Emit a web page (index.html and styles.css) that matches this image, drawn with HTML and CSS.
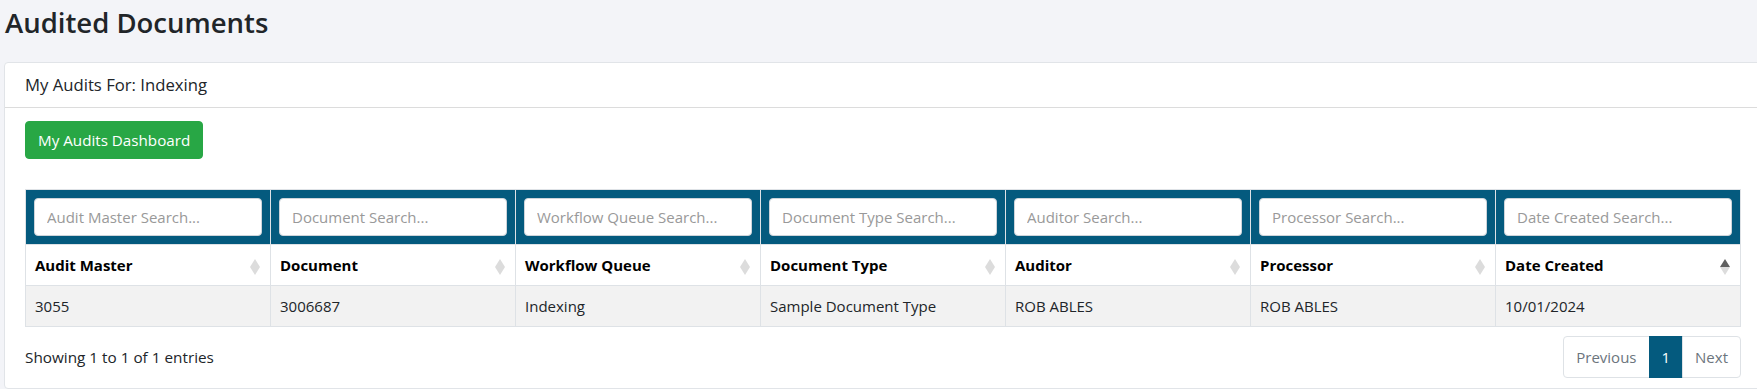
FILE: index.html
```html
<html>
    <head>
        <link rel="stylesheet" href="styles.css">
    </head>
    <body>
        <h3 class="page-title">Audited Documents</h3>

        <div class="card">
            <div class="card-header">My Audits For: Indexing</div>

            <div class="card-body">
                <button class="btn-dashboard">My Audits Dashboard</button>

                <table class="audits">
                    <thead>
                        <tr class="filters">
                            <th><input type="text" placeholder="Audit Master Search..."></th>
                            <th><input type="text" placeholder="Document Search..."></th>
                            <th><input type="text" placeholder="Workflow Queue Search..."></th>
                            <th><input type="text" placeholder="Document Type Search..."></th>
                            <th><input type="text" placeholder="Auditor Search..."></th>
                            <th><input type="text" placeholder="Processor Search..."></th>
                            <th><input type="text" placeholder="Date Created Search..."></th>
                        </tr>
                        <tr class="headings">
                            <th class="sorting">Audit Master</th>
                            <th class="sorting">Document</th>
                            <th class="sorting">Workflow Queue</th>
                            <th class="sorting">Document Type</th>
                            <th class="sorting">Auditor</th>
                            <th class="sorting">Processor</th>
                            <th class="sorting asc">Date Created</th>
                        </tr>
                    </thead>
                    <tbody>
                        <tr>
                            <td>3055</td>
                            <td>3006687</td>
                            <td>Indexing</td>
                            <td>Sample Document Type</td>
                            <td>ROB ABLES</td>
                            <td>ROB ABLES</td>
                            <td>10/01/2024</td>
                        </tr>
                    </tbody>
                </table>

                <div class="table-footer">
                    <div class="info">Showing 1 to 1 of 1 entries</div>
                    <ul class="pagination">
                        <li><a href="#">Previous</a></li>
                        <li class="active"><a href="#">1</a></li>
                        <li><a href="#">Next</a></li>
                    </ul>
                </div>
            </div>
        </div>
    </body>
</html>
```

FILE: styles.css
```css
html {
    overflow: hidden;
}

body {
    margin: 0;
    padding: 0 0 0 4px;
    background: #f3f4f8;
    font-family: "Open Sans", sans-serif;
    color: #212529;
}

.page-title {
    margin: 6px 0 23px 1px;
    font-size: 27.5px;
    font-weight: 600;
    line-height: 33px;
    color: #212529;
}

.card {
    width: 1758px;
    background: white;
    border: 1px solid #e1e4e8;
    border-radius: 4px;
}

.card-header {
    padding: 10px 20px;
    font-size: 16.7px;
    line-height: 24px;
    border-bottom: 1px solid #dcdcdc;
}

.card-body {
    padding: 13px 20px 10px 20px;
}

.btn-dashboard {
    display: block;
    height: 38px;
    padding: 0 12px;
    margin-bottom: 30px;
    border: 1px solid #28a745;
    border-radius: 4px;
    background: #28a745;
    color: white;
    font-family: "Open Sans", sans-serif;
    font-size: 15.2px;
    line-height: 36px;
    cursor: pointer;
}

table.audits {
    width: 1716px;
    table-layout: fixed;
    border-collapse: collapse;
    font-size: 15px;
}

table.audits th,
table.audits td {
    border: 1px solid #dee2e6;
    padding: 8px 9px;
    line-height: 24px;
    text-align: left;
}

tr.filters th {
    background: #045a7e;
    padding: 8px;
}

tr.filters input {
    display: block;
    width: 100%;
    height: 38px;
    padding: 0 12px;
    border: 1px solid #ced4da;
    border-radius: 4px;
    font-family: "Open Sans", sans-serif;
    font-size: 15px;
    color: #495057;
    box-sizing: border-box;
}

tr.filters input::placeholder {
    color: #999;
}

tr.filters input:focus {
    outline: 0;
}

tr.headings th {
    position: relative;
    font-weight: bold;
    color: #000;
}

th.sorting::before,
th.sorting::after {
    content: "";
    position: absolute;
    right: 10px;
    border-left: 5px solid transparent;
    border-right: 5px solid transparent;
}

th.sorting::before {
    top: 14px;
    border-bottom: 8px solid #dcdcdc;
}

th.sorting::after {
    top: 22px;
    border-top: 8px solid #dcdcdc;
}

th.sorting.asc::before {
    border-bottom-color: #5f5f5f;
}

tbody td {
    background: #f2f2f2;
}

.table-footer {
    display: flex;
    justify-content: space-between;
    align-items: center;
    width: 1716px;
    margin-top: 9px;
    font-size: 15.3px;
}

.pagination {
    display: flex;
    list-style: none;
    margin: 0;
    padding: 0;
}

.pagination a {
    display: block;
    padding: 9px 12px;
    line-height: 22px;
    font-size: 15px;
    color: #6c757d;
    text-decoration: none;
    border: 1px solid #dee2e6;
    background: white;
}

.pagination li + li a {
    margin-left: -1px;
}

.pagination li:first-child a {
    border-radius: 4px 0 0 4px;
}

.pagination li:last-child a {
    border-radius: 0 4px 4px 0;
}

.pagination li.active a {
    background: #045a7e;
    border-color: #045a7e;
    color: white;
}
```
